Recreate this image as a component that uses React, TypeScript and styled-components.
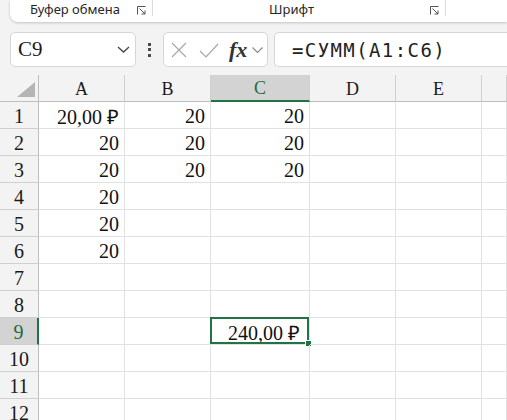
import React from 'react';
import styled, { createGlobalStyle } from 'styled-components';

const GlobalStyle = createGlobalStyle`
  body {
    margin: 0;
    background: #f3f3f3;
    overflow: hidden;
  }
`;

const Page = styled.div`
  width: 507px;
  height: 420px;
  overflow: hidden;
  background: #f3f3f3;
  font-family: 'Liberation Serif', serif;
`;

const Ribbon = styled.div`
  height: 22px;
  margin-left: 10px;
  background: #fff;
  border-bottom-left-radius: 8px;
  box-shadow: 0 1px 3px rgba(0, 0, 0, 0.2);
  display: flex;
  align-items: center;
  font-family: 'Noto Sans', sans-serif;
  font-size: 13px;
  color: #262626;
`;

const Group = styled.div<{ $width: number; $center?: boolean }>`
  width: ${(p) => p.$width}px;
  height: 100%;
  display: flex;
  align-items: center;
  padding-left: ${(p) => (p.$center ? 0 : 20)}px;
  padding-right: 6px;
  box-sizing: border-box;
`;

const GroupLabel = styled.span<{ $center?: boolean }>`
  flex: 1;
  text-align: ${(p) => (p.$center ? 'center' : 'left')};
  margin-top: -4px;
`;

const Launcher = styled.svg`
  width: 9px;
  height: 9px;
  margin-top: -2px;
`;

const Divider = styled.div`
  width: 1px;
  height: 16px;
  align-self: flex-start;
  background: #dcdcdc;
`;

const FormulaBar = styled.div`
  display: flex;
  align-items: center;
  padding: 10px 0 8px 10px;
`;

const Box = styled.div`
  height: 35px;
  box-sizing: border-box;
  background: #fff;
  border: 1px solid #d6d6d6;
  border-radius: 5px;
  display: flex;
  align-items: center;
`;

const NameBox = styled(Box)`
  width: 126px;
  padding: 0 5px 0 7px;
  font-family: 'Liberation Serif', serif;
  font-size: 21px;
  color: #1a1a1a;
  justify-content: space-between;
`;

const Dots = styled.div`
  width: 27px;
  display: flex;
  flex-direction: column;
  align-items: center;
  gap: 2.5px;
  span {
    width: 3px;
    height: 3px;
    background: #4a4a4a;
  }
`;

const FuncBox = styled(Box)`
  width: 105px;
  padding-left: 7px;
`;

const Fx = styled.span`
  font-family: 'Liberation Serif', 'DejaVu Serif', serif;
  font-style: italic;
  font-weight: bold;
  font-size: 22px;
  color: #333;
  margin: 0 5px 0 10px;
`;

const FormulaBox = styled(Box)`
  flex: 1;
  margin-left: 6px;
  margin-right: -20px;
  padding-left: 17px;
  font-family: 'DejaVu Sans Mono', monospace;
  font-size: 19px;
  letter-spacing: 1.4px;
  color: #222;
  border-right: none;
`;

const Grid = styled.div`
  display: grid;
  grid-template-columns: 39px 86px 86px 99px 86px 86px 1fr;
  grid-template-rows: 27px repeat(12, 27px);
  background: #fff;
`;

const Corner = styled.div`
  background: #f3f3f3;
  border-right: 1px solid #bdbdbd;
  border-bottom: 1px solid #bdbdbd;
  display: flex;
  align-items: flex-end;
  justify-content: flex-end;
  padding: 0 3px 4px 0;
  box-sizing: border-box;
`;

const ColHead = styled.div<{ $active?: boolean }>`
  background: ${(p) => (p.$active ? '#d3d3d3' : '#f3f3f3')};
  color: ${(p) => (p.$active ? '#1d6b41' : '#1a1a1a')};
  border-right: 1px solid #d0d0d0;
  border-bottom: ${(p) => (p.$active ? '2px solid #217346' : '1px solid #bdbdbd')};
  box-sizing: border-box;
  display: flex;
  align-items: center;
  justify-content: center;
  font-size: 18px;
  padding-top: 2px;
`;

const RowHead = styled.div<{ $active?: boolean }>`
  background: ${(p) => (p.$active ? '#d3d3d3' : '#f3f3f3')};
  color: ${(p) => (p.$active ? '#1d6b41' : '#1a1a1a')};
  border-right: ${(p) => (p.$active ? '2px solid #217346' : '1px solid #bdbdbd')};
  border-bottom: 1px solid #d0d0d0;
  box-sizing: border-box;
  display: flex;
  align-items: center;
  justify-content: center;
  font-size: 20px;
  padding-top: 2px;
`;

const Cell = styled.div<{ $selected?: boolean }>`
  position: relative;
  border-right: 1px solid #e1e1e1;
  border-bottom: 1px solid #e1e1e1;
  box-sizing: border-box;
  display: flex;
  align-items: center;
  justify-content: flex-end;
  padding: 3px ${(p) => (p.$selected ? 9 : 5)}px 0 0;
  font-size: 20px;
  color: #111;
  white-space: nowrap;
  ${(p) =>
    p.$selected &&
    `
    &::before {
      content: '';
      position: absolute;
      left: -1px;
      top: -1px;
      right: 0;
      bottom: 0;
      border: 2px solid #217346;
    }
    &::after {
      content: '';
      position: absolute;
      right: -3px;
      bottom: -3px;
      width: 5px;
      height: 5px;
      background: #217346;
      border: 1px solid #fff;
    }
  `}
`;

const columns = ['A', 'B', 'C', 'D', 'E', ''];

const data: Record<number, string[]> = {
  1: ['20,00 ₽', '20', '20'],
  2: ['20', '20', '20'],
  3: ['20', '20', '20'],
  4: ['20'],
  5: ['20'],
  6: ['20'],
  9: ['', '', '240,00 ₽'],
};

const LauncherIcon = () => (
  <Launcher viewBox='0 0 9 9' fill='none' stroke='#555' strokeWidth='1'>
    <path d='M0.5 8.5 V0.5 H8.5' />
    <path d='M2.5 2.5 L8 8' />
    <path d='M8 4.5 V8 H4.5' />
  </Launcher>
);

const App = () => {
  const rows = Array.from({ length: 12 }, (_, i) => i + 1);

  return (
    <Page>
      <GlobalStyle />
      <Ribbon>
        <Group $width={142}>
          <GroupLabel>Буфер обмена</GroupLabel>
          <LauncherIcon />
        </Group>
        <Divider />
        <Group $width={292} $center>
          <GroupLabel $center>Шрифт</GroupLabel>
          <LauncherIcon />
        </Group>
        <Divider />
      </Ribbon>

      <FormulaBar>
        <NameBox>
          <span>C9</span>
          <svg width='13' height='7' viewBox='0 0 13 7' fill='none' stroke='#444' strokeWidth='1.3'>
            <path d='M1 1 L6.5 6 L12 1' />
          </svg>
        </NameBox>
        <Dots>
          <span />
          <span />
          <span />
        </Dots>
        <FuncBox>
          <svg width='16' height='16' viewBox='0 0 16 16' fill='none' stroke='#a8a8a8' strokeWidth='1.2'>
            <path d='M1 1 L15 15 M15 1 L1 15' />
          </svg>
          <svg width='20' height='16' viewBox='0 0 20 16' fill='none' stroke='#a8a8a8' strokeWidth='1.2' style={{ marginLeft: 12 }}>
            <path d='M1 9 L7 15 L19 2' />
          </svg>
          <Fx>fx</Fx>
          <svg width='11' height='6' viewBox='0 0 11 6' fill='none' stroke='#888' strokeWidth='1.1'>
            <path d='M0.5 0.5 L5.5 5.5 L10.5 0.5' />
          </svg>
        </FuncBox>
        <FormulaBox>=СУММ(A1:C6)</FormulaBox>
      </FormulaBar>

      <Grid>
        <Corner>
          <svg width='18' height='15' viewBox='0 0 18 15'>
            <polygon points='18,0 18,15 0,15' fill='#b5b5b5' />
          </svg>
        </Corner>
        {columns.map((c, i) => (
          <ColHead key={i} $active={c === 'C'}>
            {c}
          </ColHead>
        ))}
        {rows.map((r) => (
          <React.Fragment key={r}>
            <RowHead $active={r === 9}>{r}</RowHead>
            {columns.map((_, ci) => (
              <Cell key={ci} $selected={r === 9 && ci === 2}>
                {data[r]?.[ci] ?? ''}
              </Cell>
            ))}
          </React.Fragment>
        ))}
      </Grid>
    </Page>
  );
};

export default App;
